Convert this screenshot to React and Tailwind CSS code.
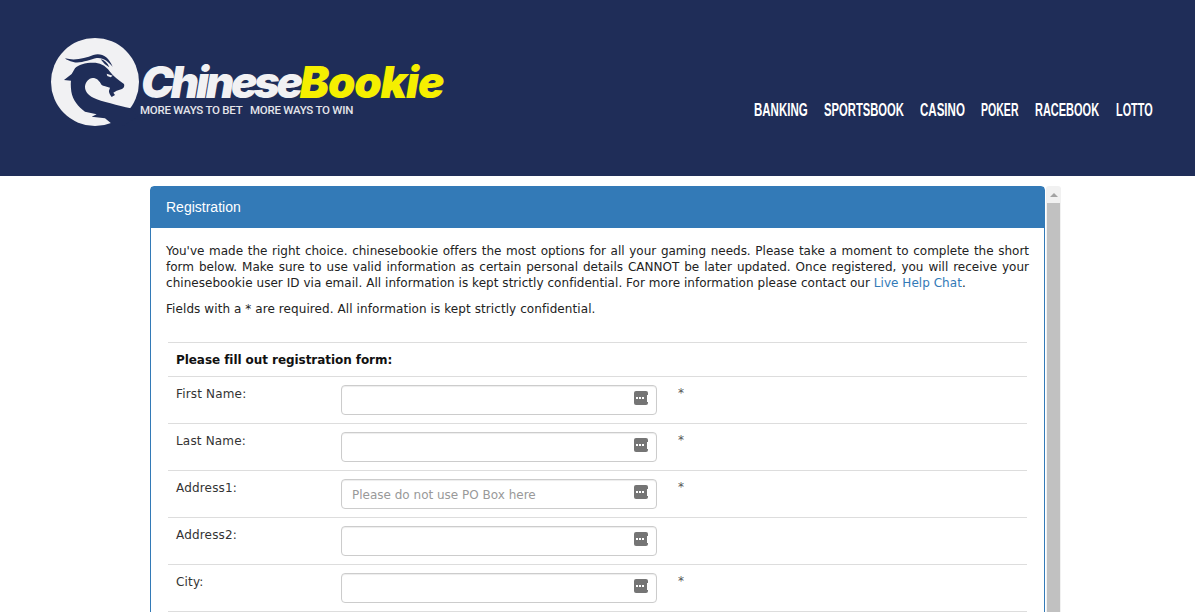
const rows = [
  { label: "First Name:", req: true },
  { label: "Last Name:", req: true },
  { label: "Address1:", req: true, ph: "Please do not use PO Box here" },
  { label: "Address2:", req: false },
  { label: "City:", req: true },
  { label: "State:", req: true },
];

const nav = [
  { t: "BANKING", w: "w-[54px]", s: "scale-x-[0.605]" },
  { t: "SPORTSBOOK", w: "w-[80px]", s: "scale-x-[0.592]" },
  { t: "CASINO", w: "w-[45px]", s: "scale-x-[0.607]" },
  { t: "POKER", w: "w-[38px]", s: "scale-x-[0.555]" },
  { t: "RACEBOOK", w: "w-[65px]", s: "scale-x-[0.578]" },
  { t: "LOTTO", w: "w-[36px]", s: "scale-x-[0.572]" },
];

function Dragon() {
  return (
    <svg viewBox="51 38 88 88" className="w-[88px] h-[88px] shrink-0">
      <circle cx="95" cy="82" r="44" fill="#f1f1f3" />
      <g transform="translate(60 50) scale(0.3333)" fill="#1f2d58">
        <path d="M12 90L35 72L45 55C55 44 75 38 100 38C118 38 135 44 150 65C160 78 175 90 192 102C194 108 192 114 186 117L170 122L160 128L165 135L155 141C150 134 146 128 147 122L150 113C140 110 130 108 125 105C118 92 110 84 98 84C86 85 76 96 75 110C75 124 84 135 100 143C125 155 175 165 212 175L232 200L170 240L156 222L135 205L95 200L110 193L75 185C55 170 38 150 34 125C32 112 32 100 33 92Z" />
        <path d="M15 25C45 33 75 25 100 15C125 8 145 20 158 50C145 35 130 22 110 24C90 28 60 42 40 36C28 33 20 30 15 25Z" />
        <path d="M122 28C132 30 142 38 148 52L134 42Z" />
        <path fill="#f1f1f3" d="M140 71L158 77L152 82L142 78Z" />
      </g>
    </svg>
  );
}

function Logo() {
  return (
    <div className="flex items-start pt-[38px] pl-[51px]">
      <Dragon />
      <div className="ml-[2px] mt-[22px] flex flex-col">
        <div
          className="h-[44px] text-[44px] leading-[44px] font-black italic whitespace-nowrap"
          style={{ fontFamily: "Inter, sans-serif" }}
        >
          <span className="text-[#f1f1f3] tracking-[-3.3px]">Chinese</span>
          <span className="text-[#f5ef00] tracking-[-1.2px]">Bookie</span>
        </div>
        <div
          className="-ml-[1px] text-[11.5px] leading-[12px] font-medium text-[#e4e4ea] tracking-[-0.25px] whitespace-pre"
          style={{ fontFamily: "Roboto, sans-serif" }}
        >
          {"MORE WAYS TO BET   MORE WAYS TO WIN"}
        </div>
      </div>
    </div>
  );
}

function Field({ label, req, ph }) {
  return (
    <div className="flex h-[47px] border-t border-[#dddddd] pt-2">
      <div className="w-[173px] pl-2 pt-px leading-4 text-[#333333] shrink-0 tracking-[0.17px]">{label}</div>
      <div className="relative w-[316px] h-[30px] shrink-0">
        <input
          readOnly
          placeholder={ph}
          className="w-full h-full border border-[#cccccc] rounded pl-[10px] pr-8 pt-[2px] text-[12px] text-[#555555] placeholder:text-[#999999] shadow-[inset_0_1px_1px_rgba(0,0,0,0.075)] outline-none"
        />
        <span className="absolute left-[293px] top-[6px] w-[14px] h-[14px] rounded-[2px] bg-[#757575] flex items-center pl-[2px] gap-px">
          <i className="w-[2px] h-[2px] bg-white" />
          <i className="w-[2px] h-[2px] bg-white" />
          <i className="w-[2px] h-[2px] bg-white" />
          <i className="w-px h-[7px] bg-white ml-[2px]" />
        </span>
      </div>
      {req && <div className="ml-[21px] leading-4 text-[#555555]">*</div>}
    </div>
  );
}

const lineClass = "leading-4 text-justify [text-align-last:justify] whitespace-nowrap";

export default function App() {
  return (
    <div
      className="h-[612px] overflow-hidden bg-white text-[12px] text-[#222222]"
      style={{ fontFamily: "'DejaVu Sans', Verdana, sans-serif" }}
    >
      <header className="h-[176px] bg-[#1f2d58] flex justify-between">
        <Logo />
        <nav
          className="flex gap-[16px] pt-[98px] pr-[43px] text-[19px] leading-6 font-bold text-white whitespace-nowrap"
          style={{ fontFamily: "'Liberation Sans', sans-serif" }}
        >
          {nav.map((n) => (
            <span key={n.t} className={n.w}>
              <span className={`inline-block origin-left ${n.s}`}>{n.t}</span>
            </span>
          ))}
        </nav>
      </header>
      <div className="flex items-start ml-[150px] mt-[10px] w-[911px]">
        <main className="w-[895px] shrink-0 border border-[#337ab7] rounded bg-white">
          <div
            className="h-[41px] bg-[#337ab7] text-white text-[14px] leading-[41px] pl-[15px]"
            style={{ fontFamily: "'Liberation Sans', Arial, sans-serif" }}
          >
            Registration
          </div>
          <div className="pt-[15px] px-[15px]">
            <div className="w-[863px]">
              <p className={lineClass + " tracking-[-0.02px]"}>You've made the right choice. chinesebookie offers the most options for all your gaming needs. Please take a moment to complete the short</p>
              <p className={lineClass}>form below. Make sure to use valid information as certain personal details CANNOT be later updated. Once registered, you will receive your</p>
              <p className="leading-4 tracking-[0.04px]">
                chinesebookie user ID via email. All information is kept strictly confidential. For more information please contact our{" "}
                <span className="text-[#337ab7]">Live Help Chat</span>.
              </p>
            </div>
            <p className="mt-[10px] leading-4 tracking-[0.08px]">Fields with a * are required. All information is kept strictly confidential.</p>
            <div className="mt-[25px] ml-[2px] w-[859px] border-t border-[#dddddd]">
              <div className="h-[33px] pl-2 font-bold leading-[35px] text-[#111111] tracking-[-0.06px]">Please fill out registration form:</div>
              {rows.map((r) => (
                <Field key={r.label} {...r} />
              ))}
            </div>
          </div>
        </main>
        <div className="ml-px w-[15px] h-[430px] bg-[#f1f1f1] rounded-t-[3px] flex flex-col items-center shrink-0">
          <div className="h-[17px] flex items-center justify-center">
            <div className="w-0 h-0 border-l-[4px] border-r-[4px] border-b-[4px] border-l-transparent border-r-transparent border-b-[#a3a3a3]" />
          </div>
          <div className="w-[13px] flex-1 bg-[#c1c1c1]" />
        </div>
      </div>
    </div>
  );
}
